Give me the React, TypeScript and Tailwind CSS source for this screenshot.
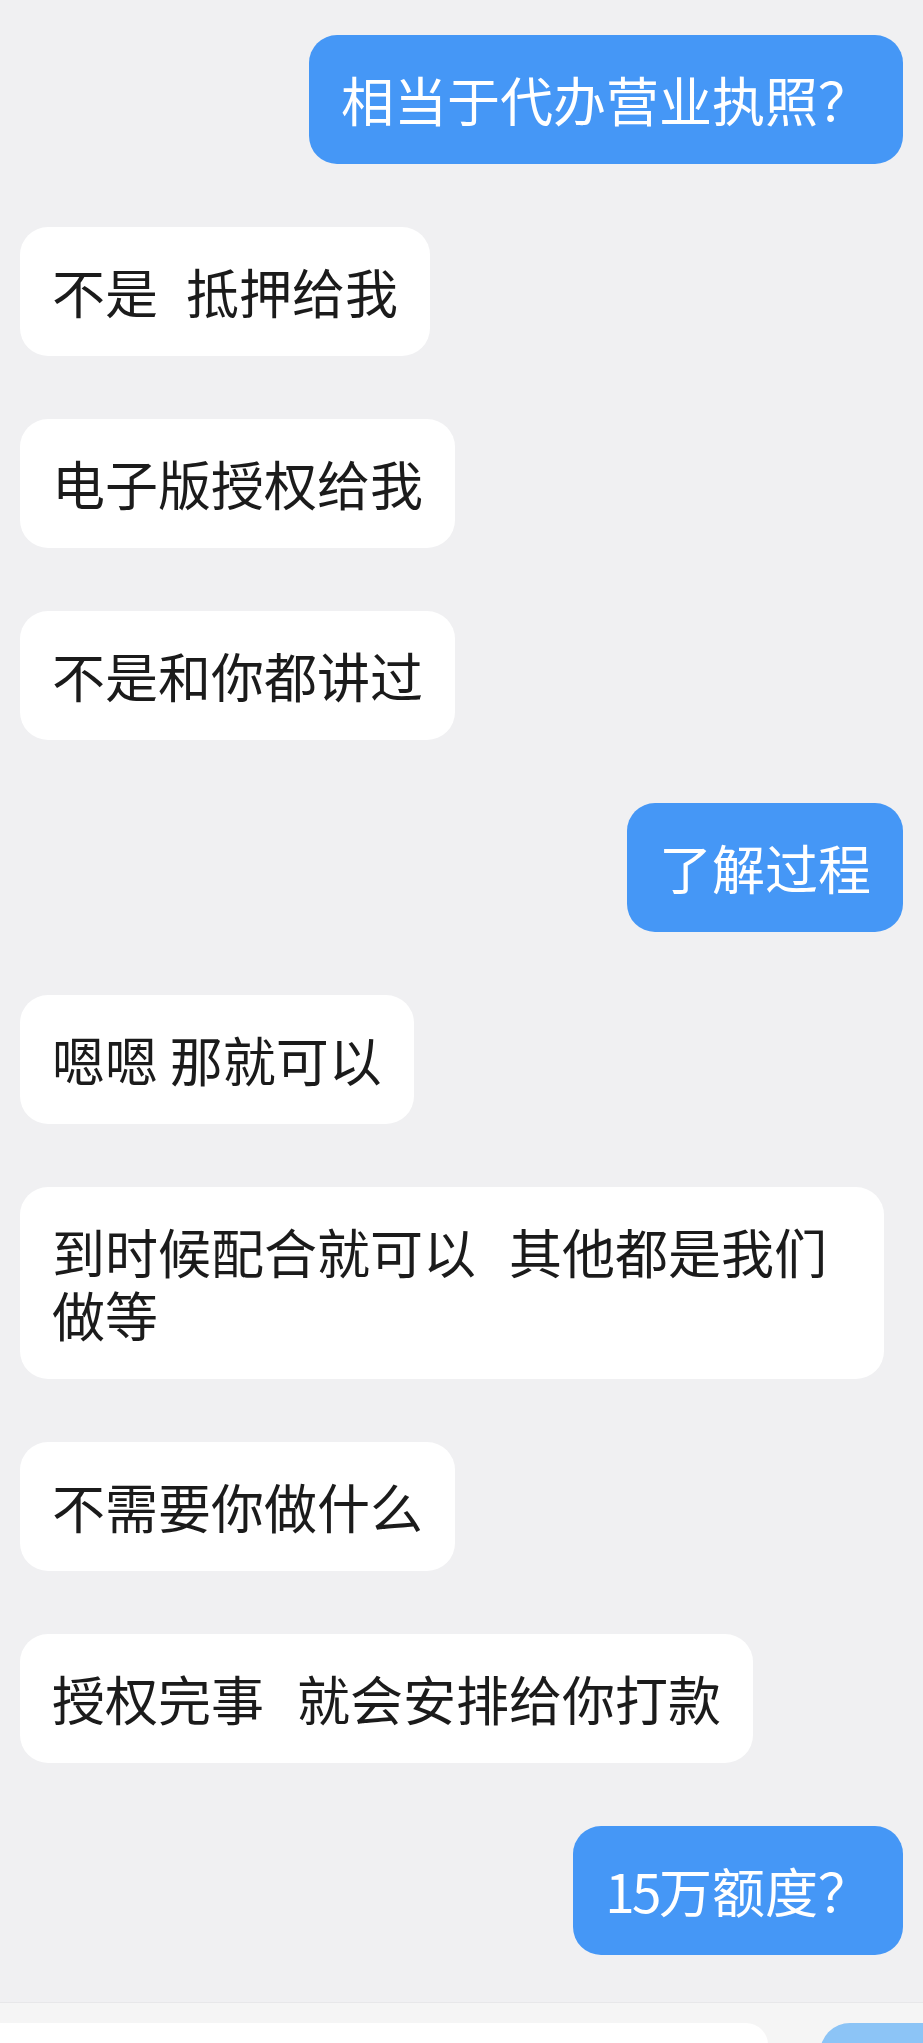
import React from 'react'

type Msg = { parts: string[]; gap?: string; mine?: boolean }

// double spaces in the original render wider than two plain spaces, so the gap is a spacer
const messages: Msg[] = [
  { parts: ['相当于代办营业执照？'], mine: true },
  { parts: ['不是', '抵押给我'], gap: 'w-[28px]' },
  { parts: ['电子版授权给我'] },
  { parts: ['不是和你都讲过'] },
  { parts: ['了解过程'], mine: true },
  { parts: ['嗯嗯 那就可以'] },
  { parts: ['到时候配合就可以', '其他都是我们做等'], gap: 'w-[33px]' },
  { parts: ['不需要你做什么'] },
  { parts: ['授权完事', '就会安排给你打款'], gap: 'w-[33px]' },
  { parts: ['15', '万额度？'], mine: true },
]

function Bubble({ parts, gap, mine }: Msg) {
  return (
    <div className={mine ? 'flex justify-end' : 'flex justify-start'}>
      <div
        className={
          'max-w-[864px] rounded-[28px] px-[32px] py-[33px] text-[53px] leading-[63px] ' +
          (mine ? 'bg-[#4597f6] text-white' : 'bg-white text-[#1b1b1b]')
        }
      >
        {parts.length === 1 ? (
          parts[0]
        ) : gap ? (
          <>
            {parts[0]}
            <span className={'inline-block ' + gap} />
            {parts[1]}
          </>
        ) : (
          <>
            <span className="tracking-[-2.5px]">{parts[0]}</span>
            {parts[1]}
          </>
        )}
      </div>
    </div>
  )
}

export default function App() {
  return (
    <div
      className="flex h-[2043px] w-[923px] flex-col overflow-hidden bg-[#f0f0f2]"
      style={{ fontFamily: '"Noto Sans CJK SC", "Noto Sans", sans-serif' }}
    >
      <div className="flex flex-1 flex-col gap-[63px] px-[20px] pt-[35px]">
        {messages.map((m, i) => (
          <Bubble key={i} {...m} />
        ))}
      </div>
      <div className="h-[41px] shrink-0 border-t border-[#e7e7e9] bg-[#f5f5f5]">
        <div className="mt-[20px] flex h-[40px] items-start">
          <div className="h-[40px] w-[768px] rounded-tr-[22px] bg-white" />
          <div className="ml-auto h-[40px] w-[103px] rounded-tl-[30px] bg-[#8cc4f6]" />
        </div>
      </div>
    </div>
  )
}
